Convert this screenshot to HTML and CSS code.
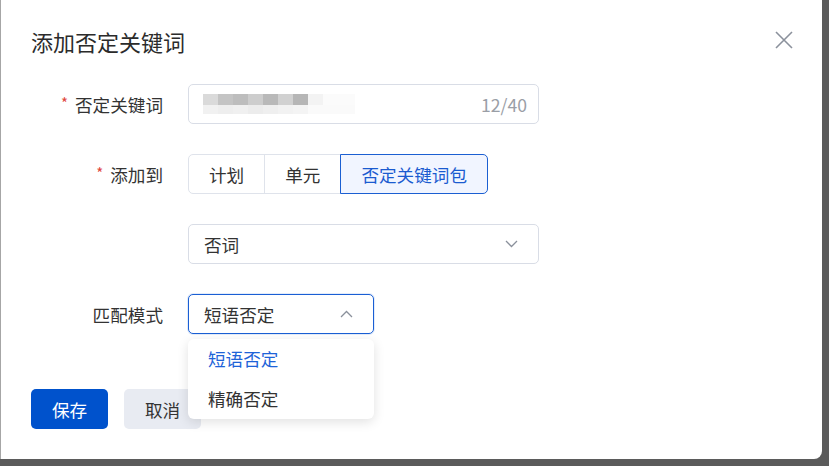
FILE: index.html
```html
<!DOCTYPE html>
<html lang="zh-CN">
<head>
  <meta charset="UTF-8" />
  <meta name="viewport" content="width=device-width, initial-scale=1.0"/>
  <title>添加否定关键词</title>
  <link rel="stylesheet" href="styles.css">
</head>
<body>
  <div class="dialog">
    <div class="dialog-head">
      <h2 class="dialog-title">添加否定关键词</h2>
      <button class="dialog-close" type="button" aria-label="关闭">
        <svg width="18" height="18" viewBox="0 0 18 18">
          <path d="M1 1L17 17M17 1L1 17" stroke="#8b919c" stroke-width="1.6" fill="none"/>
        </svg>
      </button>
    </div>

    <form class="form">
      <div class="form-row">
        <label class="form-label required">否定关键词</label>
        <div class="input wide">
          <span class="masked"></span>
          <span class="count">12/40</span>
        </div>
      </div>

      <div class="form-row">
        <label class="form-label required">添加到</label>
        <div class="radio-group">
          <span class="radio-btn">计划</span>
          <span class="radio-btn">单元</span>
          <span class="radio-btn active">否定关键词包</span>
        </div>
      </div>

      <div class="form-row">
        <span class="form-label"></span>
        <div class="select wide">
          <span>否词</span>
          <svg class="arrow" width="13" height="8" viewBox="0 0 13 8">
            <path d="M1 1L6.5 6.5L12 1" stroke="#8a909b" stroke-width="1.3" fill="none"/>
          </svg>
        </div>
      </div>

      <div class="form-row">
        <label class="form-label">匹配模式</label>
        <div class="select-wrap">
          <div class="select narrow focused">
            <span>短语否定</span>
            <svg class="arrow" width="13" height="8" viewBox="0 0 13 8">
              <path d="M1 7L6.5 1.5L12 7" stroke="#8a909b" stroke-width="1.3" fill="none"/>
            </svg>
          </div>
          <ul class="dropdown">
            <li class="option selected">短语否定</li>
            <li class="option">精确否定</li>
          </ul>
        </div>
      </div>
    </form>

    <div class="dialog-foot">
      <button class="btn btn-primary" type="button">保存</button>
      <button class="btn btn-default" type="button">取消</button>
    </div>
  </div>
</body>
</html>
```

FILE: styles.css
```css
body {
  margin: 0;
  padding: 0;
  background-color: #5b5b5b;
  font-family: "Noto Sans CJK SC", "Noto Sans", sans-serif;
  color: #333;
  overflow: hidden;
}

.dialog {
  width: 822px;
  height: 459px;
  box-sizing: border-box;
  background: #fff;
  border-left: 1px solid #a6a6a6;
  border-radius: 0 0 8px 0;
}

.dialog-head {
  display: flex;
  align-items: center;
  justify-content: space-between;
  padding: 26px 29px 0 30px;
}

.dialog-title {
  margin: 0;
  font-size: 22px;
  line-height: 30px;
  font-weight: 400;
  color: #2b2b2b;
}

.dialog-close {
  display: flex;
  padding: 0;
  border: none;
  background: none;
  margin-top: -3px;
}

/* form */
.form {
  display: flex;
  flex-direction: column;
  gap: 30px;
  margin-top: 28px;
  font-size: 17.6px;
}

.form-row {
  display: flex;
  align-items: center;
  height: 40px;
}

.form-label {
  width: 187px;
  flex-shrink: 0;
  padding-right: 25px;
  box-sizing: border-box;
  text-align: right;
  color: #333;
}

.form-label.required::before {
  content: "*";
  color: #e0463c;
  font-size: 15px;
  margin-right: 7px;
  position: relative;
  top: -3px;
}

.input,
.select {
  display: flex;
  align-items: center;
  height: 40px;
  box-sizing: border-box;
  border: 1px solid #d9dde6;
  border-radius: 5px;
  background: #fff;
}

.wide {
  width: 351px;
}

.narrow {
  width: 186px;
}

.input {
  justify-content: space-between;
  padding: 0 11px 0 14px;
}

/* pixelated keyword text */
.masked {
  width: 152px;
  height: 20px;
  background:
    linear-gradient(to right, #dadada 0 15px, #c4c4c4 15px 30px, #bdbdbd 30px 45px, #cdcdcd 45px 60px, #b9b9b9 60px 75px, #d1d1d1 75px 90px, #b6b6b6 90px 105px, #f3f3f3 105px 120px, #fbfbfb 120px 152px) top / 100% 11px no-repeat,
    linear-gradient(to right, #f1f1f1 0 15px, #eeeeee 15px 30px, #f0f0f0 30px 45px, #ececec 45px 60px, #efefef 60px 75px, #f2f2f2 75px 90px, #f4f4f4 90px 105px, #fafafa 105px 152px) bottom / 100% 9px no-repeat;
}

.count {
  color: #9a9ea6;
}

.select {
  justify-content: space-between;
  padding: 0 20px 0 15px;
}

.select.focused {
  border-color: #1a5fd4;
  box-shadow: 0 0 0 1px rgba(26, 95, 212, 0.12);
}

.select-wrap {
  position: relative;
}

.dropdown {
  position: absolute;
  top: 45px;
  left: 0;
  width: 186px;
  margin: 0;
  padding: 0;
  list-style: none;
  background: #fff;
  border-radius: 6px;
  box-shadow: 0 3px 12px rgba(0, 0, 0, 0.12);
  z-index: 2;
}

.option {
  height: 40px;
  line-height: 40px;
  padding-left: 20px;
  color: #333;
}

.option.selected {
  color: #1e63d8;
}

/* radio buttons */
.radio-group {
  display: flex;
  height: 40px;
}

.radio-btn {
  display: flex;
  align-items: center;
  padding: 0 20px;
  border: 1px solid #dfe3eb;
  margin-left: -1px;
  color: #333;
}

.radio-btn:first-child {
  margin-left: 0;
  border-radius: 5px 0 0 5px;
}

.radio-btn:last-child {
  border-radius: 0 5px 5px 0;
}

.radio-btn.active {
  position: relative;
  border-color: #1b5fd2;
  background: #f1f5ff;
  color: #1a5bd0;
}

/* footer */
.dialog-foot {
  display: flex;
  gap: 16px;
  margin-top: 55px;
  padding-left: 30px;
}

.btn {
  width: 77px;
  height: 40px;
  border: none;
  border-radius: 5px;
  font-family: inherit;
  font-size: 17.6px;
}

.btn-primary {
  background: #0052cc;
  color: #fff;
}

.btn-default {
  background: #e8ebf2;
  color: #333;
}
```
